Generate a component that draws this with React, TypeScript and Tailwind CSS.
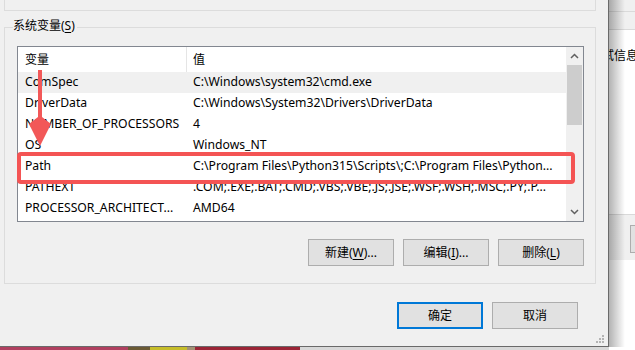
import React from "react";

const rows: { name: string; value: string; hover?: boolean }[] = [
  { name: "ComSpec", value: "C:\\Windows\\system32\\cmd.exe", hover: true },
  { name: "DriverData", value: "C:\\Windows\\System32\\Drivers\\DriverData" },
  { name: "NUMBER_OF_PROCESSORS", value: "4" },
  { name: "OS", value: "Windows_NT" },
  { name: "Path", value: "C:\\Program Files\\Python315\\Scripts\\;C:\\Program Files\\Python..." },
  { name: "PATHEXT", value: ".COM;.EXE;.BAT;.CMD;.VBS;.VBE;.JS;.JSE;.WSF;.WSH;.MSC;.PY;.P..." },
  { name: "PROCESSOR_ARCHITECT...", value: "AMD64" },
];

function Btn({ children, primary }: { children: React.ReactNode; primary?: boolean }) {
  return (
    <div
      className={
        "w-[86px] h-[27px] flex items-center justify-center bg-[#e1e1e1] " +
        (primary ? "border-2 border-[#0078d7]" : "border border-[#adadad]")
      }
    >
      {children}
    </div>
  );
}

function Dialog() {
  return (
    <div className="relative w-[609px] h-[347px] shrink-0 bg-[#f0f0f0] border-r border-b border-[#6a6a6a]">
      {/* tail of the user-variables group box */}
      <div className="ml-[4px] w-[592px] h-[11px] border-x border-b border-[#dcdcdc]" />

      {/* system variables group box */}
      <div className="relative mt-[16px] ml-[4px] w-[592px] h-[257px] border border-[#dcdcdc] pl-[12px] pt-[18px]">
        <div className="absolute left-[8px] top-[-10px] pr-[2px] bg-[#f0f0f0] leading-[16px]">
          系统变量(<u className="underline-offset-2">S</u>)
        </div>

        <div className="w-[567px] h-[176px] border border-[#828790] bg-white flex">
          <div className="w-[548px] flex flex-col">
            <div className="h-[25px] flex">
              <div className="w-[168px] pl-[7px] flex items-center">变量</div>
              <div className="w-px bg-[#e5e5e5]" />
              <div className="flex-1 pl-[6px] flex items-center">值</div>
            </div>
            {rows.map((r) => (
              <div
                key={r.name}
                className={"h-[21px] flex items-center text-[12.2px] " + (r.hover ? "bg-[#f0f0f0]" : "")}
              >
                <div className="w-[169px] pl-[7px] whitespace-nowrap overflow-hidden">{r.name}</div>
                <div className="flex-1 pl-[6px] whitespace-nowrap overflow-hidden">{r.value}</div>
              </div>
            ))}
          </div>
          <div className="w-[17px] bg-[#f0f0f0] flex flex-col">
            <div className="h-[18px] flex items-center justify-center">
              <svg width="9" height="6" viewBox="0 0 9 6">
                <path d="M1 5 L4.5 1.5 L8 5" fill="none" stroke="#606060" strokeWidth="1.5" />
              </svg>
            </div>
            <div className="mx-[1px] h-[60px] bg-[#cdcdcd]" />
            <div className="flex-1" />
            <div className="h-[18px] flex items-center justify-center">
              <svg width="9" height="6" viewBox="0 0 9 6">
                <path d="M1 1 L4.5 4.5 L8 1" fill="none" stroke="#606060" strokeWidth="1.5" />
              </svg>
            </div>
          </div>
        </div>

        <div className="w-[567px] mt-[17px] flex justify-end gap-[9px]">
          <Btn>
            新建(<u className="underline-offset-2">W</u>)...
          </Btn>
          <Btn>
            编辑(<u className="underline-offset-2">I</u>)...
          </Btn>
          <Btn>
            删除(<u className="underline-offset-2">L</u>)
          </Btn>
        </div>
      </div>

      <div className="mt-[18px] pr-[30px] flex justify-end gap-[9px]">
        <Btn primary>确定</Btn>
        <Btn>取消</Btn>
      </div>

      {/* resize grip */}
      <svg className="absolute right-[3px] bottom-[2px]" width="9" height="9" viewBox="0 0 9 9">
        <g fill="#b4b4b4">
          <rect x="6" y="0" width="2" height="2" />
          <rect x="3" y="3" width="2" height="2" />
          <rect x="6" y="3" width="2" height="2" />
          <rect x="0" y="6" width="2" height="2" />
          <rect x="3" y="6" width="2" height="2" />
          <rect x="6" y="6" width="2" height="2" />
        </g>
      </svg>
    </div>
  );
}

function BackWindow() {
  return (
    <div className="relative flex-1 overflow-hidden bg-white flex flex-col">
      <div className="h-[12px] bg-[#f0f0f0] border-b border-[#dadada]" />
      <div className="h-[18px] bg-[#f0f0f0] border-b border-[#dadada]" />
      <div className="mt-[18px] h-[16px] leading-[16px] ml-[-19px] whitespace-nowrap">调试信息</div>
      <div className="h-[150px]" />
      <div className="h-[46px] bg-[#f0f0f0] border-t border-[#d9d9d9] pt-[10px] pl-[21px]">
        <div className="w-[20px] h-[28px] border border-[#adadad] bg-[#e1e1e1]" />
      </div>
      <div className="flex-1" />
      <div className="pointer-events-none absolute left-0 top-0 bottom-0 w-[16px] bg-gradient-to-r from-black/30 to-transparent" />
    </div>
  );
}

export default function App() {
  return (
    <div className="relative w-[635px] h-[350px] overflow-hidden bg-white text-[12px] text-black font-['Noto_Sans','Noto_Sans_CJK_SC',sans-serif]">
      <div className="flex h-[347px]">
        <Dialog />
        <BackWindow />
      </div>
      <div className="flex h-[3px]">
        <div className="w-[128px] bg-[#b0405f]" />
        <div className="w-[22px] bg-[#6b5a35]" />
        <div className="w-[37px] bg-[#c6bd2a]" />
        <div className="w-[8px] bg-[#a39273]" />
        <div className="w-[105px] bg-[#9b2536]" />
        <div className="w-[309px] bg-[#d8d8d8]" />
        <div className="flex-1 bg-white" />
      </div>

      {/* annotations */}
      <svg className="pointer-events-none absolute left-0 top-0" width="635" height="350" viewBox="0 0 635 350">
        <rect x="19" y="154" width="554" height="28" rx="2" fill="none" stroke="#f45454" strokeWidth="4" />
        <polygon points="38,70 42,70 42,117 51,124 40,146 29,124 38,117" fill="#f25858" />
      </svg>
    </div>
  );
}
